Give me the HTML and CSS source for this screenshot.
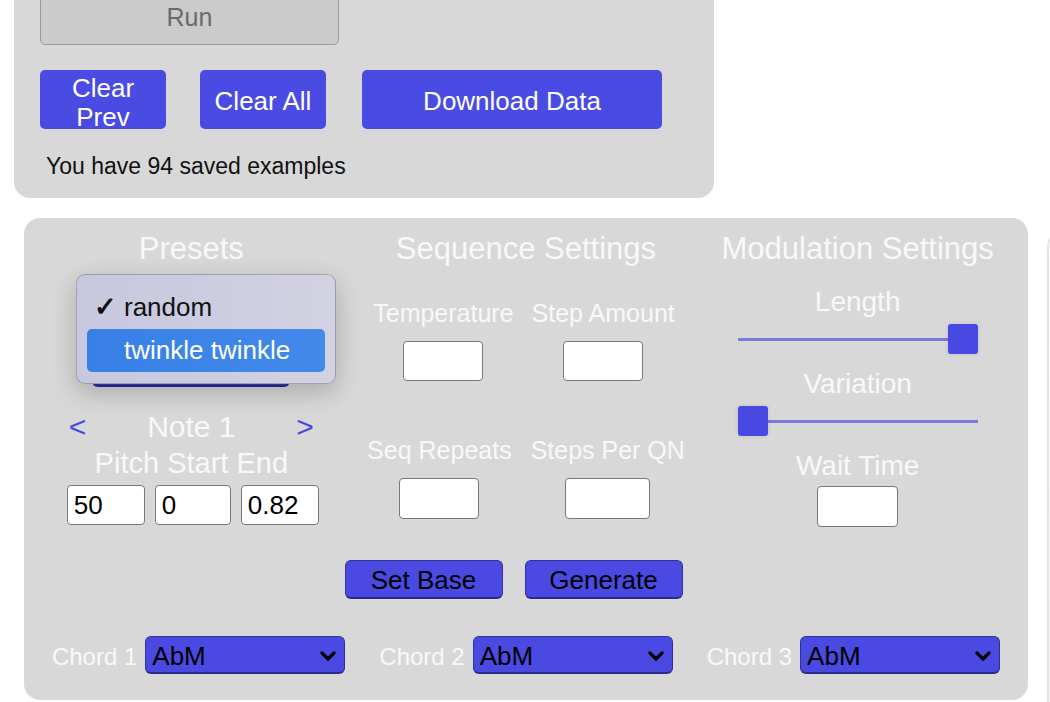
FILE: index.html
```html
<!DOCTYPE html>
<html lang="en">
<head>
<meta charset="utf-8">
<title>Melody Generator</title>
<link rel="stylesheet" href="styles.css">
</head>
<body>
<div class="page">
  <section class="panel top-panel">
    <button class="run-btn">Run</button>
    <div class="action-row">
      <button class="blue-btn clear-prev">Clear Prev</button>
      <button class="blue-btn clear-all">Clear All</button>
      <button class="blue-btn download">Download Data</button>
    </div>
    <p class="saved">You have 94 saved examples</p>
  </section>

  <div class="lower-row">
    <section class="panel settings-panel">
      <div class="columns">
        <div class="col presets">
          <h2 class="col-title">Presets</h2>
          <div class="select-wrap preset-select">
            <select class="blue-select"><option>random</option><option>twinkle twinkle</option></select>
          </div>
          <div class="note-nav">
            <span class="arrow">&lt;</span>
            <span class="note-label">Note 1</span>
            <span class="arrow">&gt;</span>
          </div>
          <div class="pitch-label">Pitch Start End</div>
          <div class="note-inputs">
            <input class="field note-field" type="text" value="50">
            <input class="field note-field mid" type="text" value="0">
            <input class="field note-field" type="text" value="0.82">
          </div>
          <div class="preset-menu">
            <div class="menu-item"><span class="check">&#10003;</span>random</div>
            <div class="menu-item active">twinkle twinkle</div>
          </div>
        </div>

        <div class="col sequence">
          <h2 class="col-title">Sequence Settings</h2>
          <div class="seq-row first">
            <div class="seq-item"><div class="seq-label">Temperature</div><input class="field seq-field" type="text"></div>
            <div class="seq-item"><div class="seq-label">Step Amount</div><input class="field seq-field" type="text"></div>
          </div>
          <div class="seq-row second">
            <div class="seq-item"><div class="seq-label">Seq Repeats</div><input class="field seq-field" type="text"></div>
            <div class="seq-item"><div class="seq-label">Steps Per QN</div><input class="field seq-field wide" type="text"></div>
          </div>
        </div>

        <div class="col modulation">
          <h2 class="col-title">Modulation Settings</h2>
          <div class="mod-label length-label">Length</div>
          <input class="slider" type="range" min="0" max="100" value="100">
          <div class="mod-label">Variation</div>
          <input class="slider" type="range" min="0" max="100" value="0">
          <div class="mod-label">Wait Time</div>
          <input class="field wait-field" type="text">
        </div>
      </div>

      <div class="gen-row">
        <button class="dark-btn">Set Base</button>
        <button class="dark-btn">Generate</button>
      </div>

      <div class="chord-row">
        <div class="chord-group">
          <span class="chord-label">Chord 1</span>
          <div class="select-wrap chord-select">
            <select class="blue-select"><option>AbM</option></select>
            <svg class="chev" viewBox="0 0 16 10" width="16" height="10"><path d="M2 2 L8 8 L14 2" fill="none" stroke="#000" stroke-width="3.2" stroke-linecap="round" stroke-linejoin="round"/></svg>
          </div>
        </div>
        <div class="chord-group">
          <span class="chord-label">Chord 2</span>
          <div class="select-wrap chord-select">
            <select class="blue-select"><option>AbM</option></select>
            <svg class="chev" viewBox="0 0 16 10" width="16" height="10"><path d="M2 2 L8 8 L14 2" fill="none" stroke="#000" stroke-width="3.2" stroke-linecap="round" stroke-linejoin="round"/></svg>
          </div>
        </div>
        <div class="chord-group">
          <span class="chord-label">Chord 3</span>
          <div class="select-wrap chord-select">
            <select class="blue-select"><option>AbM</option></select>
            <svg class="chev" viewBox="0 0 16 10" width="16" height="10"><path d="M2 2 L8 8 L14 2" fill="none" stroke="#000" stroke-width="3.2" stroke-linecap="round" stroke-linejoin="round"/></svg>
          </div>
        </div>
      </div>
    </section>
    <section class="side-panel"></section>
  </div>
</div>
</body>
</html>
```
FILE: styles.css
```css
html, body {
  margin: 0;
  padding: 0;
  background: #ffffff;
  overflow: hidden;
  font-family: "Liberation Sans", Arial, Helvetica, sans-serif;
}

.page {
  width: 1050px;
  height: 702px;
  overflow: hidden;
}

.panel {
  background: #d8d8d8;
  border-radius: 16px;
  box-sizing: border-box;
}

/* ---------- top panel ---------- */
.top-panel {
  width: 700px;
  margin: -30px 0 0 14px;
  padding: 20px 26px 19px 26px;
}

.run-btn {
  display: block;
  width: 299px;
  height: 55px;
  background: #cbcbcb;
  border: 1.5px solid #9c9c9c;
  border-radius: 5px;
  color: #6a6a6a;
  font-family: inherit;
  font-size: 25px;
  padding: 0;
}

.action-row {
  display: flex;
  margin-top: 25px;
}

.blue-btn {
  height: 59px;
  background: #4a4be3;
  border: none;
  border-radius: 5px;
  color: #ffffff;
  font-family: inherit;
  font-size: 26px;
  line-height: 29px;
  padding: 4px 10px 0 10px;
}

.clear-prev { width: 126px; margin-right: 34px; }
.clear-all { width: 126px; margin-right: 36px; }
.download { width: 300px; }

.saved {
  margin: 24px 0 0 6px;
  font-size: 23px;
  line-height: 26px;
  color: #111111;
}

/* ---------- lower row ---------- */
.lower-row {
  display: flex;
  align-items: flex-start;
  margin-top: 20px;
}

.settings-panel {
  flex: 0 0 1004px;
  width: 1004px;
  margin-left: 24px;
  padding: 13px 0 26px 0;
}

.side-panel {
  flex: 0 0 300px;
  height: 520px;
  margin: 12px 0 0 19px;
  border: 2px solid #e4e4e4;
  border-radius: 16px;
  background: linear-gradient(#ffffff, #f6f6f6);
}

.columns {
  display: grid;
  grid-template-columns: 1fr 1fr 1fr;
  align-items: start;
}

.col {
  display: flex;
  flex-direction: column;
  align-items: center;
  position: relative;
}

.col.modulation {
  padding-right: 6px;
}

.col-title {
  margin: 0;
  font-size: 31px;
  line-height: 36px;
  font-weight: normal;
  color: #f8f8f8;
  white-space: nowrap;
}

/* ---------- inputs ---------- */
.field {
  box-sizing: border-box;
  height: 40px;
  background: #ffffff;
  border: 1.5px solid #777777;
  border-radius: 4px;
  font-family: inherit;
  font-size: 26px;
  color: #000000;
  padding: 0 0 0 6px;
  margin: 0;
  outline: none;
}

/* ---------- presets ---------- */
.select-wrap {
  position: relative;
}

.blue-select {
  appearance: none;
  -webkit-appearance: none;
  box-sizing: border-box;
  width: 100%;
  height: 38px;
  margin: 0;
  background: #4a4ae2;
  border: 1px solid #30309a;
  border-bottom: 2px solid #2a2a8c;
  border-radius: 6px;
  font-family: inherit;
  font-size: 26px;
  color: #000000;
  padding: 3px 0 0 6px;
}

.preset-select {
  width: 198px;
  margin-top: 82px;
}

.preset-select .blue-select {
  background: #3a3ac0;
}

.note-nav {
  display: flex;
  justify-content: space-between;
  align-items: center;
  width: 245px;
  margin-top: 23px;
  font-size: 30px;
  line-height: 34px;
}

.arrow {
  color: #4a4ae2;
  font-size: 30px;
}

.note-label {
  color: #f8f8f8;
}

.pitch-label {
  margin-top: 3px;
  font-size: 29px;
  line-height: 32px;
  color: #f8f8f8;
  white-space: nowrap;
}

.note-inputs {
  display: flex;
  gap: 10px;
  margin: 6px 0 0 3px;
}

.note-field { width: 78px; }
.note-field.mid { width: 76px; }

.preset-menu {
  position: absolute;
  left: 52px;
  top: 43px;
  width: 260px;
  box-sizing: border-box;
  padding: 11px 10px;
  background: linear-gradient(90deg, #c7c7df, #d2d2e2);
  border: 1px solid rgba(0, 0, 0, 0.22);
  border-radius: 9px;
  box-shadow: 0 8px 26px rgba(0, 0, 0, 0.22);
}

.menu-item {
  position: relative;
  height: 43px;
  line-height: 43px;
  padding-left: 37px;
  font-size: 26px;
  color: #111111;
  border-radius: 5px;
  white-space: nowrap;
}

.menu-item.active {
  background: linear-gradient(90deg, #3880e6, #4289ea);
  color: #ffffff;
}

.check {
  position: absolute;
  left: 7px;
  top: 0;
  font-size: 27px;
  font-weight: bold;
  color: #111111;
}

/* ---------- sequence ---------- */
.seq-row {
  display: flex;
  gap: 18px;
}

.seq-row.first { margin: 32px 4px 0 0; }
.seq-row.second { margin-top: 55px; gap: 19px; }

.seq-item {
  display: flex;
  flex-direction: column;
  align-items: center;
}

.seq-label {
  font-size: 25px;
  line-height: 28px;
  color: #f8f8f8;
  white-space: nowrap;
}

.seq-field {
  width: 80px;
  margin-top: 14px;
}

.seq-row.second .seq-field { height: 41px; }
.seq-field.wide { width: 85px; }

/* ---------- modulation ---------- */
.mod-label {
  font-size: 28px;
  line-height: 32px;
  color: #f8f8f8;
  margin-top: 14px;
}

.mod-label.length-label { margin-top: 19px; }

.slider {
  -webkit-appearance: none;
  appearance: none;
  width: 240px;
  height: 30px;
  margin: 6px 0 0 0;
  padding: 0;
  background: transparent;
}

.slider::-webkit-slider-runnable-track {
  height: 3px;
  background: #7b7bd5;
  border: none;
}

.slider::-webkit-slider-thumb {
  -webkit-appearance: none;
  width: 30px;
  height: 30px;
  margin-top: -13.5px;
  background: #4848e2;
  border: none;
  border-radius: 3px;
  box-shadow: 0 0 4px rgba(0, 0, 0, 0.12);
}

.wait-field {
  width: 81px;
  height: 41px;
  margin-top: 4px;
}

/* ---------- generate row ---------- */
.gen-row {
  display: flex;
  justify-content: center;
  gap: 22px;
  padding-right: 25px;
  margin-top: 33px;
}

.dark-btn {
  box-sizing: border-box;
  width: 158px;
  height: 39px;
  background: #4a4ae2;
  border: 1px solid #30309a;
  border-bottom: 2px solid #2a2a8c;
  border-radius: 6px;
  font-family: inherit;
  font-size: 26px;
  color: #000000;
  padding: 3px 0 0 0;
}

/* ---------- chord row ---------- */
.chord-row {
  display: flex;
  justify-content: center;
  gap: 34px;
  margin-top: 37px;
}

.chord-group {
  display: flex;
  align-items: center;
}

.chord-label {
  font-size: 24px;
  color: #f8f8f8;
  margin-right: 8px;
  padding-top: 4px;
  white-space: nowrap;
}

.chord-select {
  width: 200px;
}

.chev {
  position: absolute;
  right: 9px;
  top: 15px;
}
```
